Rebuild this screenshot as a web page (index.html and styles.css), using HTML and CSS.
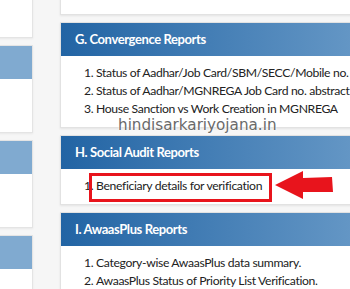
FILE: index.html
```html
<!DOCTYPE html>
<html lang="en">

<head>
    <meta charset="UTF-8">
    <meta name="viewport" content="width=device-width, initial-scale=1.0">
    <title>PMAY-G reports</title>
    <link rel="stylesheet" href="styles.css">
</head>

<body>
    <div class="page">
        <!-- left column, mostly off screen -->
        <aside class="side">
            <div class="side-panel first"></div>
            <div class="side-panel">
                <div class="side-head"></div>
            </div>
            <div class="side-panel">
                <div class="side-head"></div>
            </div>
            <div class="side-panel">
                <div class="side-head"></div>
            </div>
        </aside>

        <main class="reports">
            <div class="panel top"></div>

            <div class="panel">
                <div class="panel-head">G. Convergence Reports</div>
                <ol class="panel-body">
                    <li>Status of Aadhar/Job Card/SBM/SECC/Mobile no.</li>
                    <li>Status of Aadhar/MGNREGA Job Card no. abstract</li>
                    <li>House Sanction vs Work Creation in MGNREGA</li>
                </ol>
                <div class="watermark">hindisarkariyojana.in</div>
            </div>

            <div class="panel">
                <div class="panel-head">H. Social Audit Reports</div>
                <ol class="panel-body">
                    <li>Beneficiary details for verification</li>
                </ol>
                <div class="highlight"></div>
                <svg class="arrow" width="60" height="32" viewBox="0 0 60 32">
                    <polygon points="0,15 28,1 28,8 57,7 58,22 28,22 28,29" fill="#e8141c" />
                </svg>
            </div>

            <div class="panel">
                <div class="panel-head">I. AwaasPlus Reports</div>
                <ol class="panel-body">
                    <li>Category-wise AwaasPlus data summary.</li>
                    <li>AwaasPlus Status of Priority List Verification.</li>
                </ol>
            </div>
        </main>
    </div>
</body>

</html>
```

FILE: styles.css
```css
body {
    margin: 0;
    background-color: #f6f6f6;
    font-family: Lato, "Open Sans", sans-serif;
    overflow: hidden;
}

.page {
    display: flex;
    align-items: flex-start;
    gap: 27px;
    width: 350px;
    height: 289px;
    overflow: hidden;
}

/* left column */
.side {
    flex: none;
    width: 200px;
    margin-left: -167px;
    margin-top: -51px;
    display: flex;
    flex-direction: column;
    gap: 7px;
}

.side-panel {
    flex: none;
    height: 86px;
    background-color: #fff;
    border: 1px solid #e4e4e4;
    box-shadow: 0 1px 2px rgba(0, 0, 0, 0.06);
}

.side-panel.first {
    height: 87px;
}

.side-head {
    height: 33px;
    background-color: #80aad0;
}

/* right column */
.reports {
    flex: none;
    width: 320px;
    margin-top: -41px;
    display: flex;
    flex-direction: column;
    gap: 7px;
}

.panel {
    flex: none;
    position: relative;
    background-color: #fff;
    border: 1px solid #e2e2e2;
    box-shadow: 0 1px 2px rgba(0, 0, 0, 0.08);
}

.panel.top {
    height: 54px;
}

.panel-head {
    height: 33px;
    line-height: 33px;
    padding-left: 14px;
    color: #fff;
    font-size: 13px;
    font-weight: bold;
    letter-spacing: -0.4px;
    background: linear-gradient(to right, #2264a4, #6a9bc8);
}

.panel-body {
    margin: 0;
    padding: 8px 0 9px 23px;
    list-style-position: inside;
    font-size: 12.2px;
    letter-spacing: -0.35px;
    line-height: 18px;
    color: #222;
}

.watermark {
    position: absolute;
    left: 57px;
    bottom: -7px;
    font-family: "DejaVu Sans", sans-serif;
    font-size: 15.2px;
    color: #6a6a6a;
    text-shadow: 0 0 2px #fff, 0 0 2px #fff;
}

.highlight {
    position: absolute;
    left: 28px;
    top: 37px;
    width: 177px;
    height: 23px;
    border: 3px solid #e8141c;
}

.arrow {
    position: absolute;
    left: 214px;
    top: 34px;
}
```
